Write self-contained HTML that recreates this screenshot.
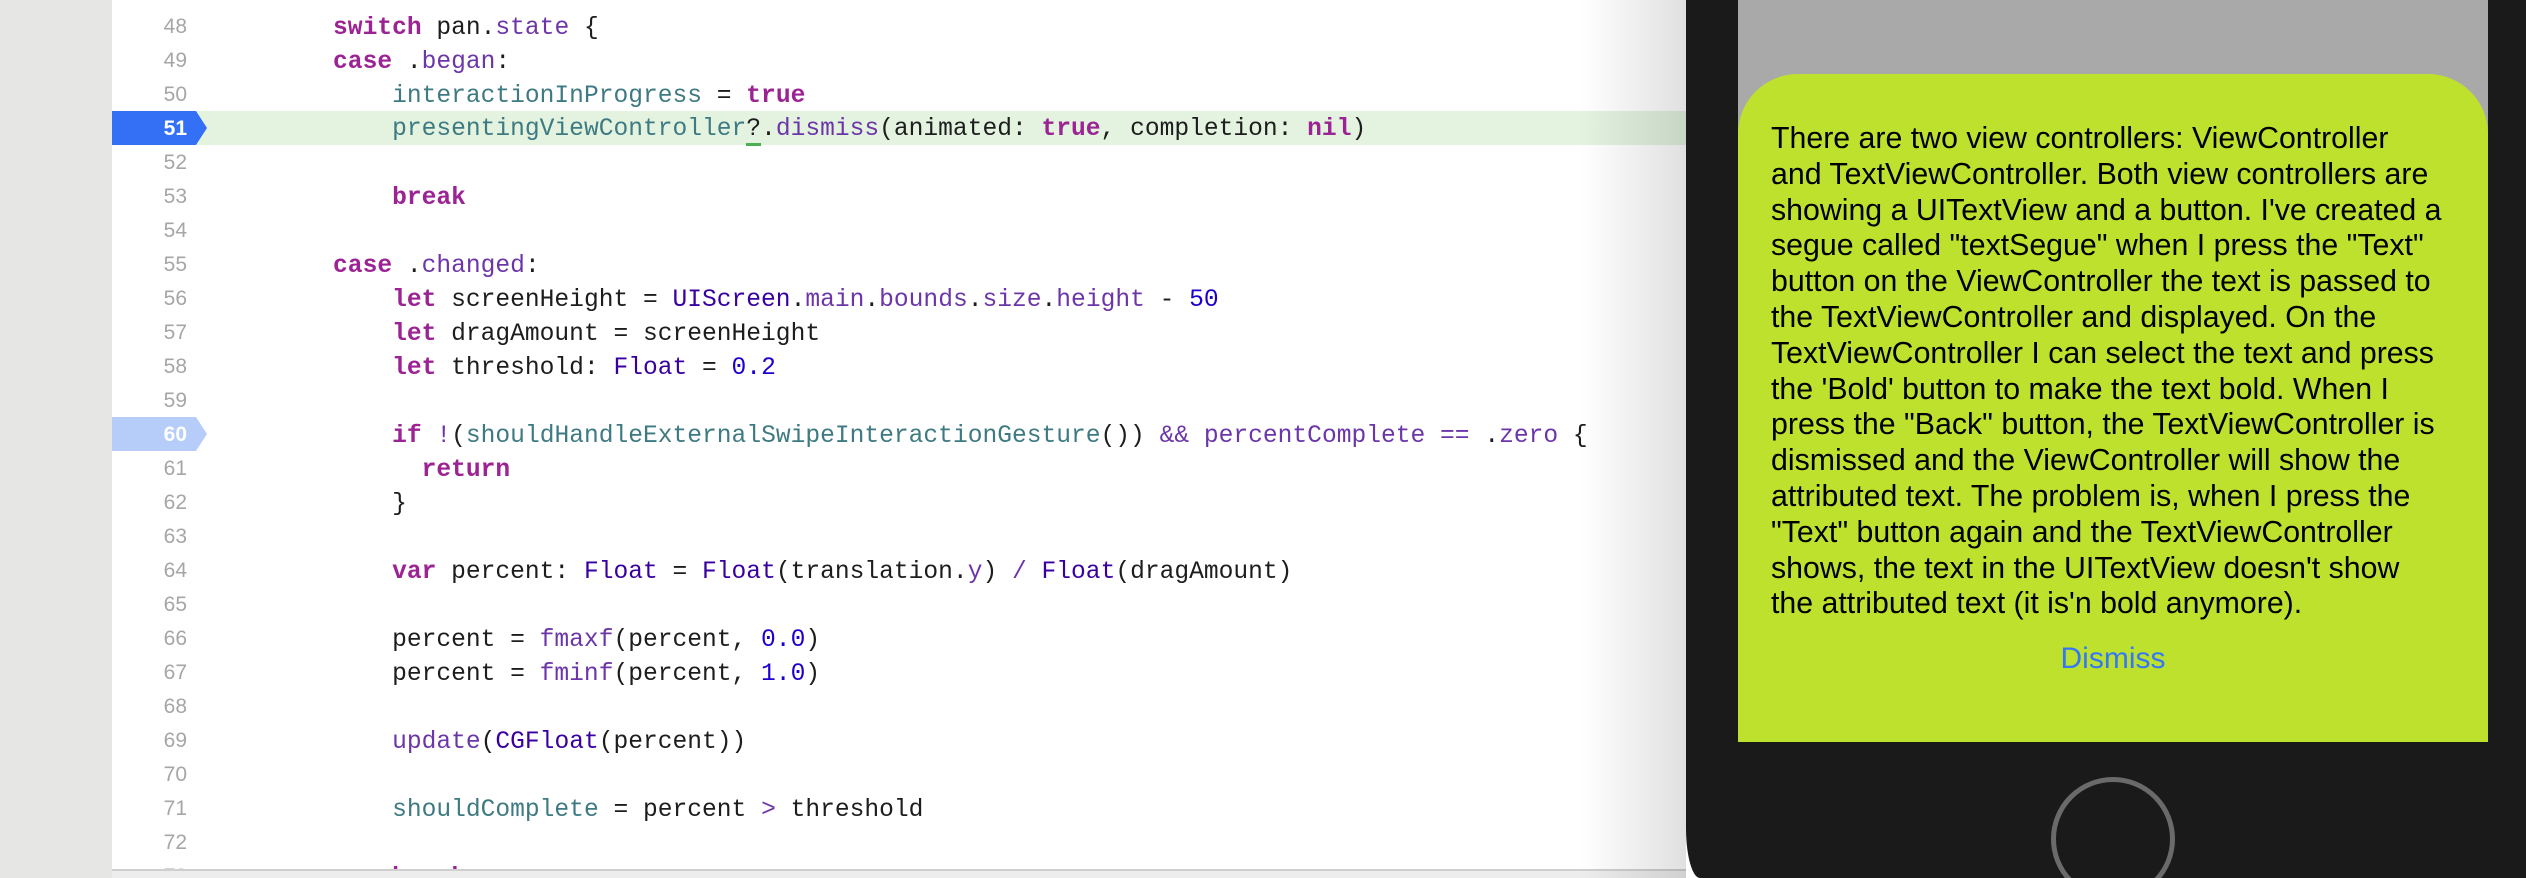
<!DOCTYPE html>
<html><head><meta charset="utf-8"><style>
html,body{margin:0;padding:0;width:2526px;height:878px;overflow:hidden;background:#fff;position:relative;}
.gut{position:absolute;left:0;top:0;width:112px;height:878px;background:#e6e6e5;}
.ln{position:absolute;left:112px;width:75px;text-align:right;font-family:"Liberation Sans",sans-serif;font-size:21px;color:#a6a6a6;line-height:34px;height:34px;}
.code{position:absolute;left:274px;font-family:"Liberation Mono",monospace;font-size:24.6px;line-height:34px;height:34px;white-space:pre;color:#1d1d1d;}
.k{color:#9b2393;font-weight:bold}
.t{color:#6c36a9}
.p{color:#3e7a82}
.n{color:#1c00cf}
.c{color:#3900a0}
.hl{position:absolute;left:112px;top:111px;width:1574px;height:34px;background:#e3f3e0;}
.shadow{position:absolute;left:1580px;top:0;width:106px;height:878px;background:linear-gradient(to right,rgba(0,0,0,0),rgba(0,0,0,0.12));}
.bottomline{position:absolute;left:112px;top:869px;width:1574px;height:2px;background:#cfcfcf;}
.bottomfill{position:absolute;left:112px;top:871px;width:1574px;height:7px;background:#ededed;}
.phone{position:absolute;left:1686px;top:0;width:840px;height:878px;background:#1a1a1a;border-bottom-left-radius:14px 50px;}
.scr{position:absolute;left:1738px;top:0;width:750px;height:742px;background:#a9a9a9;}
.card{position:absolute;left:1738px;top:74px;width:750px;height:668px;background:#bee12e;border-radius:60px 60px 0 0;}
.txt{position:absolute;left:1771px;top:121px;white-space:nowrap;font-family:"Liberation Sans",sans-serif;font-size:30.3px;line-height:35.8px;color:#000;}
.dis{position:absolute;left:1738px;width:750px;top:642px;text-align:center;font-family:"Liberation Sans",sans-serif;font-size:30px;color:#3478f6;}
.home{position:absolute;left:2051px;top:777px;width:114px;height:114px;border:5px solid #6a6a6a;border-radius:50%;}
</style></head><body>
<div class="gut"></div>
<div class="hl"></div>
<svg style="position:absolute;left:112px;top:111px" width="96" height="34"><polygon points="0,0 84,0 95,17 84,34 0,34" fill="#3370f6"/></svg>
<svg style="position:absolute;left:112px;top:417px" width="96" height="34"><polygon points="0,0 84,0 95,17 84,34 0,34" fill="#b5cdf8"/></svg>

<div class="ln" style="top:-24px">47</div>
<div class="ln" style="top:10px">48</div>
<div class="ln" style="top:44px">49</div>
<div class="ln" style="top:78px">50</div>
<div class="ln" style="top:112px;color:#fff;font-weight:bold">51</div>
<div class="ln" style="top:146px">52</div>
<div class="ln" style="top:180px">53</div>
<div class="ln" style="top:214px">54</div>
<div class="ln" style="top:248px">55</div>
<div class="ln" style="top:282px">56</div>
<div class="ln" style="top:316px">57</div>
<div class="ln" style="top:350px">58</div>
<div class="ln" style="top:384px">59</div>
<div class="ln" style="top:418px;color:#fff;font-weight:bold">60</div>
<div class="ln" style="top:452px">61</div>
<div class="ln" style="top:486px">62</div>
<div class="ln" style="top:520px">63</div>
<div class="ln" style="top:554px">64</div>
<div class="ln" style="top:588px">65</div>
<div class="ln" style="top:622px">66</div>
<div class="ln" style="top:656px">67</div>
<div class="ln" style="top:690px">68</div>
<div class="ln" style="top:724px">69</div>
<div class="ln" style="top:758px">70</div>
<div class="ln" style="top:792px">71</div>
<div class="ln" style="top:826px">72</div>
<div class="ln" style="top:860px">73</div>

<div class="code" style="top:12px">    <span class="k">switch</span> pan.<span class="t">state</span> {</div>
<div class="code" style="top:46px">    <span class="k">case</span> .<span class="t">began</span>:</div>
<div class="code" style="top:80px">        <span class="p">interactionInProgress</span> = <span class="k">true</span></div>
<div class="code" style="top:113px">        <span class="p">presentingViewController</span><span style="border-bottom:3px solid #4caf50">?</span>.<span class="t">dismiss</span>(animated: <span class="k">true</span>, completion: <span class="k">nil</span>)</div>
<div class="code" style="top:182px">        <span class="k">break</span></div>
<div class="code" style="top:250px">    <span class="k">case</span> .<span class="t">changed</span>:</div>
<div class="code" style="top:284px">        <span class="k">let</span> screenHeight = <span class="c">UIScreen</span>.<span class="t">main</span>.<span class="t">bounds</span>.<span class="t">size</span>.<span class="t">height</span> - <span class="n">50</span></div>
<div class="code" style="top:318px">        <span class="k">let</span> dragAmount = screenHeight</div>
<div class="code" style="top:352px">        <span class="k">let</span> threshold: <span class="c">Float</span> = <span class="n">0.2</span></div>
<div class="code" style="top:420px">        <span class="k">if</span> <span class="t">!</span>(<span class="p">shouldHandleExternalSwipeInteractionGesture</span>()) <span class="t">&amp;&amp;</span> <span class="t">percentComplete</span> <span class="t">==</span> .<span class="t">zero</span> {</div>
<div class="code" style="top:454px">          <span class="k">return</span></div>
<div class="code" style="top:488px">        }</div>
<div class="code" style="top:556px">        <span class="k">var</span> percent: <span class="c">Float</span> = <span class="c">Float</span>(translation.<span class="t">y</span>) <span class="t">/</span> <span class="c">Float</span>(dragAmount)</div>
<div class="code" style="top:624px">        percent = <span class="t">fmaxf</span>(percent, <span class="n">0.0</span>)</div>
<div class="code" style="top:658px">        percent = <span class="t">fminf</span>(percent, <span class="n">1.0</span>)</div>
<div class="code" style="top:726px">        <span class="t">update</span>(<span class="c">CGFloat</span>(percent))</div>
<div class="code" style="top:794px">        <span class="p">shouldComplete</span> = percent <span class="t">&gt;</span> threshold</div>
<div class="code" style="top:862px">        <span class="k">break</span></div>
<div class="bottomline"></div>
<div class="bottomfill"></div>
<div class="shadow"></div>

<div class="phone"></div>
<div class="scr"></div>
<div class="card"></div>
<div class="txt">There are two view controllers: ViewController<br>and TextViewController. Both view controllers are<br>showing a UITextView and a button. I've created a<br>segue called "textSegue" when I press the "Text"<br>button on the ViewController the text is passed to<br>the TextViewController and displayed. On the<br>TextViewController I can select the text and press<br>the 'Bold' button to make the text bold. When I<br>press the "Back" button, the TextViewController is<br>dismissed and the ViewController will show the<br>attributed text. The problem is, when I press the<br>"Text" button again and the TextViewController<br>shows, the text in the UITextView doesn't show<br>the attributed text (it is'n bold anymore).</div>
<div class="dis">Dismiss</div>
<div class="home"></div>
</body></html>
